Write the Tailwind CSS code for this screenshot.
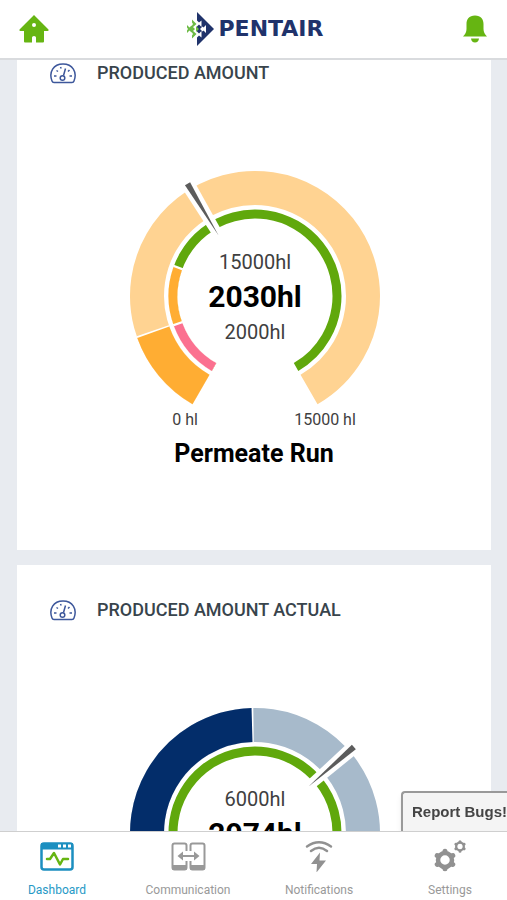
<!DOCTYPE html>
<html lang="en">

<head>
    <meta charset="UTF-8">
    <meta name="viewport" content="width=device-width, initial-scale=1.0">
    <script src="https://cdn.jsdelivr.net/npm/@tailwindcss/browser@4"></script>
    <title>Pentair Dashboard</title>
</head>

<body class="flex flex-col h-screen overflow-hidden bg-[#e8ebf0] font-['Roboto',sans-serif]">
    <!-- HEADER -->
    <header class="fixed inset-x-0 top-0 z-10 flex items-center justify-between h-[60px] px-[18px] bg-white border-b-2 border-[#d9dbde]">
        <a href="#" aria-label="Home">
            <svg class="w-8 h-8" viewBox="0 0 32 32" fill="#66b512" aria-hidden="true">
                <path fill-rule="evenodd" d="M16 2 30.500 16.500Q31 18 29.500 18H26V28.500Q26 29.500 25 29.500H18V24.500Q18 23 16 23T14 24.500V29.500H7Q6 29.500 6 28.500V18H2.500Q1 18 1.500 16.500ZM16 10a2 2 0 1 0 0 4 2 2 0 0 0 0-4Z" />
            </svg>
        </a>
        <a href="#" class="flex items-center gap-1 font-['DejaVu_Sans',sans-serif] text-[22px] leading-8 font-bold text-[#20336b]">
            <svg class="w-[27px] h-9" viewBox="0 0 27 36" aria-hidden="true">
                <path fill="#20336b" d="M10 1 27 18 10 35Z" />
                <!-- white fish cut out of the navy triangle -->
                <path fill="#fff" d="M10 9.500 12 11.500 14.500 9.500V16L12 13.500 10 15.500ZM10 26.500 12 24.500 14.500 26.500V20L12 22.500 10 20.500ZM13 18 15.500 15.500 16.500 16.500 19 14V22L16.500 19.500 15.500 20.500Z" />
                <path fill="#6dbb45" d="M0 14 2.500 16.500 4.500 14.500 8 18 4.500 21.500 2.500 19.500 0 22V19.500L1 18 0 16.500ZM5 8.500 9.500 13 5 17V14.500L6 13 5 11.500ZM5 19 9.500 23 5 27.500V24.500L6 23 5 21.500ZM9 15 12 18 9 21Z" />
            </svg>
            PENTAIR
        </a>
        <button aria-label="Alerts">
            <svg class="w-7 h-8" viewBox="0 0 28 32" fill="#66b512" aria-hidden="true">
                <path d="M14 2.500C20 2.500 22.500 6.500 22.500 11V16Q22.500 20 26 23.500H2Q5.500 20 5.500 16V11C5.500 6.500 8 2.500 14 2.500ZM10 25.500H18Q17.500 29.500 14 29.500T10 25.500Z" />
            </svg>
        </button>
    </header>

    <!-- CARDS -->
    <main class="flex flex-col flex-1 gap-[15px] min-h-0 pt-7 pb-[69px] pl-[17px] pr-4 overflow-hidden">
        <section class="shrink-0 pt-[30px] pb-20 bg-white">
            <div class="flex items-center gap-[21px] h-[30px] pl-[33px]">
                <svg class="w-[26px] h-[22px]" viewBox="0 0 26 22" fill="none" stroke="#3d579b" stroke-width="1.5" aria-hidden="true">
                    <path d="M4 20.500Q2.500 20.500 2 19C-1.500 10 3.500 2 13 2S27.500 10 24 19Q23.500 20.500 22 20.500Z" />
                    <circle cx="12.500" cy="16" r="2.300" />
                    <path d="M13.500 13.500 15.500 6.500M4 14H6.500M19.500 14H22M6.500 8.500 8 9.500M10.500 5 11.200 6.500M19.500 8 18 9.500" />
                </svg>
                <h2 class="text-[18px] leading-[30px] font-medium text-[#38444c]">PRODUCED AMOUNT</h2>
            </div>
            <svg class="block w-[260px] h-[264px] mx-auto mt-[78px]" viewBox="-131 -130 260 264" role="img" aria-label="Permeate Run">
                <g fill="none" transform="rotate(120)">
                    <circle r="108" pathLength="360" stroke="#ffd392" stroke-width="34" stroke-dasharray="300 60" />
                    <circle r="108" pathLength="360" stroke="#fff" stroke-width="34" stroke-dasharray="41.200 318.800" />
                    <circle r="108" pathLength="360" stroke="#ffad33" stroke-width="34" stroke-dasharray="40.400 319.600" />
                    <circle r="82" pathLength="360" stroke="#60a80c" stroke-width="9" stroke-dasharray="300 60" />
                    <circle r="82" pathLength="360" stroke="#fff" stroke-width="10" stroke-dasharray="81 279" />
                    <circle r="82" pathLength="360" stroke="#ffad33" stroke-width="9" stroke-dasharray="79.500 280.500" />
                    <circle r="82" pathLength="360" stroke="#fff" stroke-width="10" stroke-dasharray="41 319" />
                    <circle r="82" pathLength="360" stroke="#fb7190" stroke-width="9" stroke-dasharray="39.500 320.500" />
                </g>
                <g transform="rotate(-31)">
                    <path fill="#fff" d="M-5-70-7-132H7L5-70Z" />
                    <path fill="#5c5c5c" d="M0-71-3-131H3Z" />
                </g>
                <g text-anchor="middle">
                    <text y="-27" font-size="20" fill="#404040">15000hl</text>
                    <text y="11" font-size="30" font-weight="700">2030hl</text>
                    <text y="43" font-size="20" fill="#404040">2000hl</text>
                    <text x="-70" y="129" font-size="16" fill="#404040">0 hl</text>
                    <text x="70" y="129" font-size="16" fill="#404040">15000 hl</text>
                </g>
            </svg>
            <h3 class="mt-2 text-[25px] leading-8 font-bold text-center text-black">Permeate Run</h3>
        </section>

        <section class="shrink-0 pt-[30px] pb-20 bg-white">
            <div class="flex items-center gap-[21px] h-[30px] pl-[33px]">
                <svg class="w-[26px] h-[22px]" viewBox="0 0 26 22" fill="none" stroke="#3d579b" stroke-width="1.5" aria-hidden="true">
                    <path d="M4 20.500Q2.500 20.500 2 19C-1.500 10 3.500 2 13 2S27.500 10 24 19Q23.500 20.500 22 20.500Z" />
                    <circle cx="12.500" cy="16" r="2.300" />
                    <path d="M13.500 13.500 15.500 6.500M4 14H6.500M19.500 14H22M6.500 8.500 8 9.500M10.500 5 11.200 6.500M19.500 8 18 9.500" />
                </svg>
                <h2 class="text-[18px] leading-[30px] font-medium text-[#38444c]">PRODUCED AMOUNT ACTUAL</h2>
            </div>
            <svg class="block w-[260px] h-[264px] mx-auto mt-[78px]" viewBox="-131 -130 260 264" role="img" aria-label="Produced amount actual">
                <g fill="none" transform="rotate(120)">
                    <circle r="108" pathLength="360" stroke="#a7bacb" stroke-width="34" stroke-dasharray="300 60" />
                    <circle r="108" pathLength="360" stroke="#fff" stroke-width="34" stroke-dasharray="149.200 210.800" />
                    <circle r="108" pathLength="360" stroke="#032d6a" stroke-width="34" stroke-dasharray="148.400 211.600" />
                    <circle r="82" pathLength="360" stroke="#60a80c" stroke-width="9" stroke-dasharray="300 60" />
                </g>
                <g transform="rotate(49)">
                    <path fill="#fff" d="M-5-70-7-132H7L5-70Z" />
                    <path fill="#5c5c5c" d="M0-71-3-131H3Z" />
                </g>
                <g text-anchor="middle">
                    <text y="-27" font-size="20" fill="#404040">6000hl</text>
                    <text y="11" font-size="30" font-weight="700">2974hl</text>
                </g>
            </svg>
        </section>
    </main>

    <button class="fixed right-0 bottom-[69px] h-10 pl-[9px] bg-[#f4f4f4] border-t-2 border-l-2 border-[#999] rounded-tl-sm shadow-md font-['Liberation_Sans',sans-serif] text-[15px] font-bold text-[#444]">Report Bugs!</button>

    <!-- BOTTOM NAV -->
    <nav class="fixed inset-x-0 bottom-0 flex justify-between h-[69px] px-[9px] pt-2 bg-white border-t border-[#cfcfcf] text-[12px] leading-5 text-[#999]">
        <a href="#" class="flex flex-col items-center w-24 gap-2 text-[#2699c6]" aria-current="page">
            <svg class="w-9 h-8" viewBox="0 0 36 32" fill="none" aria-hidden="true">
                <rect x="2.500" y="3.500" width="31" height="26" rx="2.500" stroke="#1c8fc0" stroke-width="2.500" />
                <path fill="#1c8fc0" d="M2 3H34V9.500H2Z" />
                <path fill="#fff" d="M19 4.500H22V7.500H19ZM24 4.500H27V7.500H24ZM29 4.500H32V7.500H29Z" />
                <path stroke="#66b512" stroke-width="2.500" stroke-linejoin="round" stroke-linecap="round" d="M8 19H11L15 13 21 24.500 24 19H29" />
            </svg>
            Dashboard
        </a>
        <a href="#" class="flex flex-col items-center w-24 gap-2">
            <svg class="w-9 h-8" viewBox="0 0 36 32" fill="none" stroke="#999" stroke-width="2" aria-hidden="true">
                <path d="M16.500 11V5.500Q16.500 3.500 14.500 3.500H4.500Q2.500 3.500 2.500 5.500V27.500Q2.500 29.500 4.500 29.500H14.500Q16.500 29.500 16.500 27.500V21M20.500 11V5.500Q20.500 3.500 22.500 3.500H32.500Q34.500 3.500 34.500 5.500V27.500Q34.500 29.500 32.500 29.500H22.500Q20.500 29.500 20.500 27.500V21" />
                <path fill="#999" stroke="none" d="M2 25H17V29.500H2ZM20 25H35V29.500H20ZM7.500 16 13 11.500V20.500ZM29.500 16 24 11.500V20.500Z" />
                <path d="M11 16H26" />
            </svg>
            Communication
        </a>
        <a href="#" class="flex flex-col items-center w-24 gap-2">
            <svg class="w-9 h-8" viewBox="0 0 36 32" fill="none" stroke="#919191" stroke-width="2.400" stroke-linecap="round" aria-hidden="true">
                <path d="M6 6.500Q18-2 30 6.500M10 11Q18 4.500 26 11" />
                <path fill="#919191" stroke="none" d="M19 12.500 10 24H16L15.500 32.500 25 20.500H18.500Z" />
            </svg>
            Notifications
        </a>
        <a href="#" class="flex flex-col items-center w-24 gap-2">
            <svg class="w-9 h-8" viewBox="0 0 36 32" fill="none" stroke="#919191" aria-hidden="true">
                <circle cx="13" cy="20" r="7" stroke-width="4.500" />
                <path stroke-width="5" stroke-linecap="round" d="M13 11.500V11.300M13 28.500V28.700M5.600 15.700 5.200 15.500M20.400 15.700 20.800 15.500M5.600 24.300 5.200 24.500M20.400 24.300 20.800 24.500" />
                <circle cx="28" cy="6.500" r="3.800" stroke-width="2.300" />
                <path stroke-width="3" stroke-linecap="round" d="M28 2V1.800M28 11V11.200M24.100 4.300 23.900 4.200M31.900 4.300 32.100 4.200M24.100 8.700 23.900 8.800M31.900 8.700 32.100 8.800" />
            </svg>
            Settings
        </a>
    </nav>
</body>

</html>
